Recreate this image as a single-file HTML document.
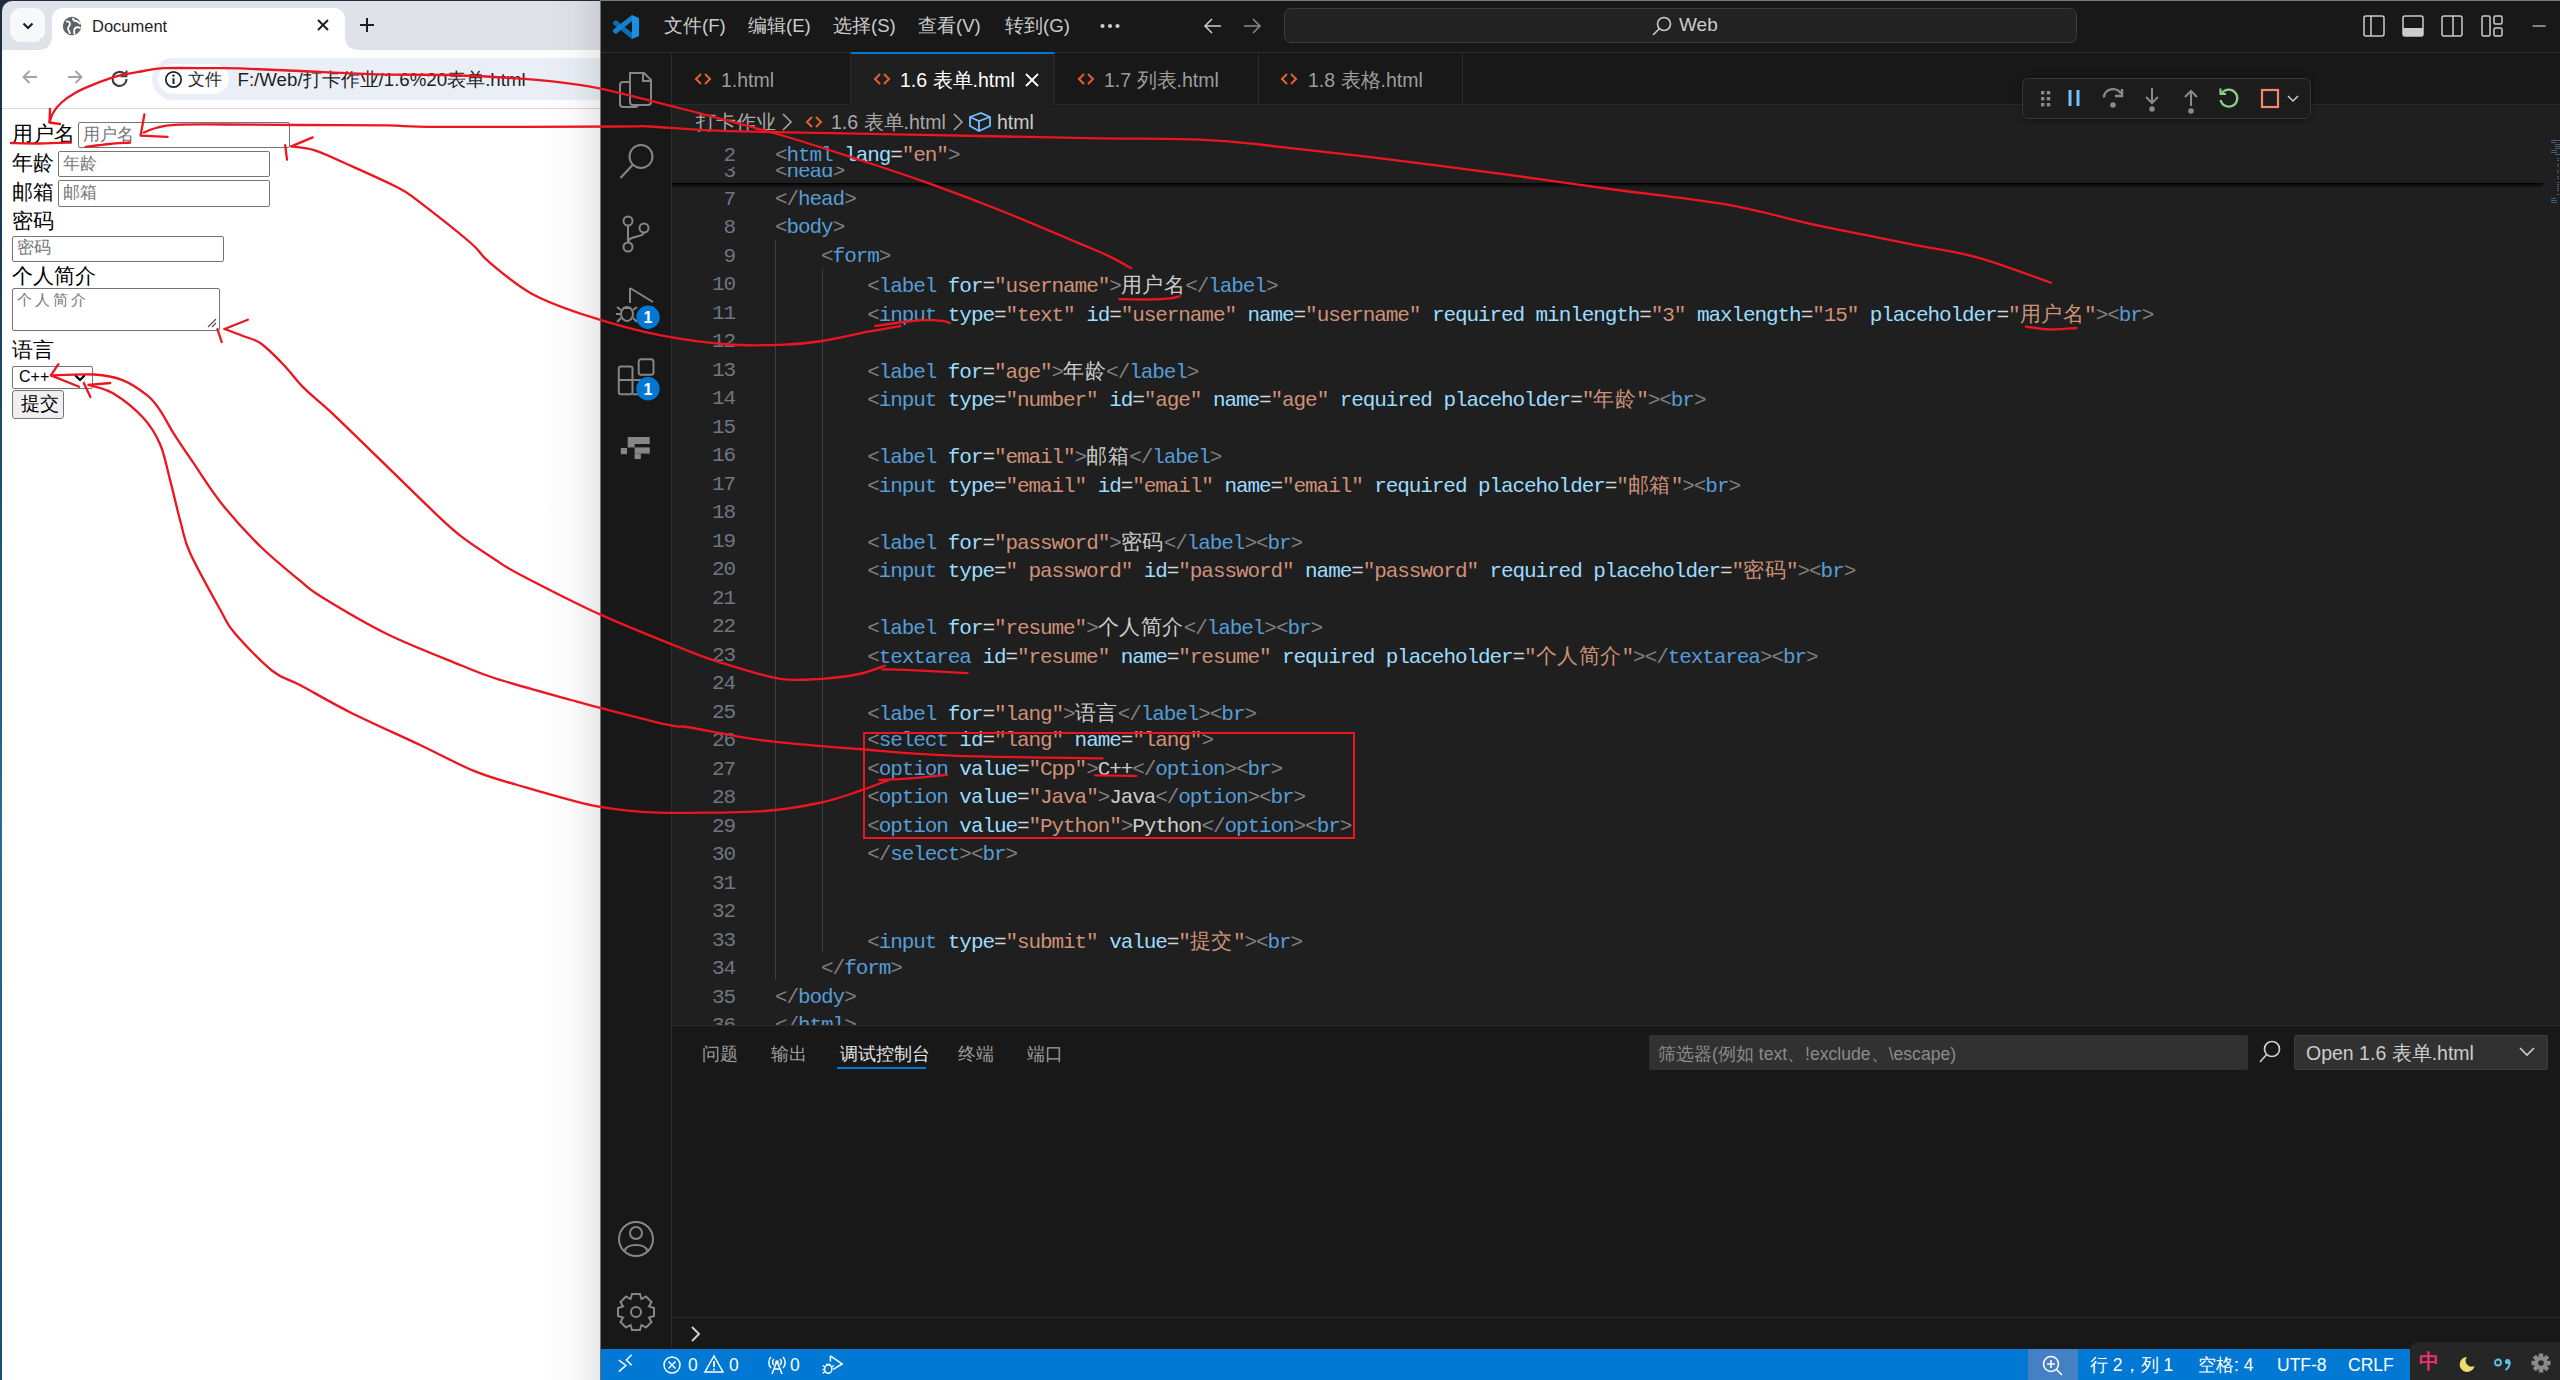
<!DOCTYPE html>
<html><head><meta charset="utf-8">
<style>
*{box-sizing:border-box;margin:0;padding:0}
html,body{width:2560px;height:1380px;overflow:hidden;background:#1f1f1f;font-family:"Liberation Sans",sans-serif}
.abs{position:absolute}
/* ---------- browser ---------- */
#br{position:absolute;left:0;top:0;width:600px;height:1380px;background:#fff;overflow:hidden}
#desk{position:absolute;left:0;top:0;width:600px;height:1380px;background:linear-gradient(#1e2c3e,#1c4a6a 30%,#2a6a8e 60%,#1d4e72)}
#tabstrip{position:absolute;left:2px;top:1px;width:598px;height:49px;background:#dfe3e9;border-top-left-radius:10px}
#toolbar{position:absolute;left:2px;top:50px;width:598px;height:59px;background:#fff;border-bottom:1px solid #d3d6da}
#content{position:absolute;left:2px;top:109px;width:598px;height:1271px;background:#fff}
.fl{position:absolute;font-size:21.3px;color:#000;line-height:22px;white-space:nowrap}
.inp{position:absolute;border:1px solid #767676;border-radius:2px;background:#fff}
.ph{position:absolute;font-size:17px;color:#757575;white-space:nowrap;line-height:20px}
/* ---------- vscode ---------- */
#vs{position:absolute;left:600px;top:0;width:1960px;height:1380px;background:#181818;border-left:1px solid #707070;border-top:1px solid #7a7a7a}
.menu{position:absolute;top:14px;font-size:18.6px;color:#cccccc;line-height:24px;white-space:nowrap}
#act{position:absolute;left:600px;top:52px;width:72px;height:1296px;background:#181818;border-right:1px solid #2b2b2b;border-top:1px solid #2b2b2b}
#tabs{position:absolute;left:672px;top:52px;width:1888px;height:53px;background:#181818;border-bottom:1px solid #2b2b2b;border-top:1px solid #2b2b2b}
.tab{position:absolute;top:0;height:52px;border-right:1px solid #2b2b2b;font-size:19.5px;color:#9d9d9d;white-space:nowrap}
.tab span.t{position:absolute;top:15px;line-height:24px}
.tico{position:absolute;top:17px;width:18px;height:18px}
#crumbs{position:absolute;left:672px;top:105px;width:1888px;height:35px;background:#1f1f1f;font-size:19.5px;color:#a9a9a9;white-space:nowrap}
#editor{position:absolute;left:672px;top:140px;width:1888px;height:885px;background:#1f1f1f;overflow:hidden}
.ln{position:absolute;left:0;width:1888px;height:28.5px;line-height:28.5px;font-family:"Liberation Mono",monospace;font-size:21px;letter-spacing:-1.08px;white-space:pre}
.ln b{position:absolute;right:1825px;font-weight:normal;color:#6e7681;text-align:right}
.cd{position:absolute;top:0}
.cd i{font-style:normal;font-family:"Liberation Sans",sans-serif;font-size:20.5px;letter-spacing:0.5px}
#sticky{position:absolute;left:0;top:0;width:1871px;height:43px;background:#1f1f1f;overflow:hidden}
#panel{position:absolute;left:672px;top:1025px;width:1888px;height:323px;background:#181818;border-top:1px solid #2b2b2b}
.ptab{position:absolute;top:16px;font-size:17.5px;color:#9d9d9d;line-height:24px;white-space:nowrap}
#status{position:absolute;left:600px;top:1349px;width:1960px;height:31px;background:#0078d4;color:#fff;font-size:17.5px;white-space:nowrap}
.st{position:absolute;top:4px;line-height:24px}
svg{position:absolute;overflow:visible}
</style></head><body>

<!-- ================= BROWSER ================= -->
<div id="br">
  <div id="desk"></div>
  <div id="tabstrip">
    <div class="abs" style="left:8px;top:7px;width:35px;height:34px;background:#f6f8fa;border-radius:11px"></div>
    <svg style="left:19px;top:18px" width="14" height="14" viewBox="0 0 14 14"><path d="M2.5 4.5 L7 9 L11.5 4.5" fill="none" stroke="#1f1f1f" stroke-width="2.2"/></svg>
    <div class="abs" style="left:50px;top:7px;width:293px;height:42px;background:#fff;border-radius:11px 11px 0 0"></div>
    <div class="abs" style="left:38px;top:37px;width:12px;height:12px;background:radial-gradient(circle at 0 0,#dfe3e9 11.5px,#fff 12px)"></div>
    <div class="abs" style="left:343px;top:37px;width:12px;height:12px;background:radial-gradient(circle at 100% 0,#dfe3e9 11.5px,#fff 12px)"></div>
    <svg style="left:60px;top:15px" width="20" height="20" viewBox="0 0 20 20"><circle cx="10" cy="10" r="9.2" fill="#5f6368"/><path d="M4 5.5 C6 5,8 6,8 8 C8 10,6 10.5,6 12.5 C6 14,7.5 15,8 17.8 M11 2 C11 4,12.5 5,14 5 C16 5,17 7,18.5 8 M18.5 12 C16 11,13.5 11,12.5 13 C11.5 15,13 17,12 18.5" fill="none" stroke="#fff" stroke-width="1.8"/></svg>
    <div class="abs" style="left:90px;top:14px;font-size:16.5px;color:#1f1f1f;line-height:22px">Document</div>
    <svg style="left:314px;top:17px" width="14" height="14" viewBox="0 0 14 14"><path d="M2 2 L12 12 M12 2 L2 12" stroke="#1f1f1f" stroke-width="2"/></svg>
    <svg style="left:357px;top:16px" width="16" height="16" viewBox="0 0 16 16"><path d="M8 1 V15 M1 8 H15" stroke="#1f1f1f" stroke-width="2"/></svg>
  </div>
  <div id="toolbar">
    <svg style="left:19px;top:18px" width="18" height="18" viewBox="0 0 18 18"><path d="M16 9 H3 M8.5 3 L2.5 9 L8.5 15" fill="none" stroke="#a0a3a7" stroke-width="1.9"/></svg>
    <svg style="left:64px;top:18px" width="18" height="18" viewBox="0 0 18 18"><path d="M2 9 H15 M9.5 3 L15.5 9 L9.5 15" fill="none" stroke="#a0a3a7" stroke-width="1.9"/></svg>
    <svg style="left:108px;top:19px" width="20" height="20" viewBox="0 0 20 20"><path d="M16.5 10 A7 7 0 1 1 14.5 5" fill="none" stroke="#3c4043" stroke-width="2.1"/><path d="M17 1.5 V7.8 H10.7 Z" fill="#3c4043" stroke="#3c4043" stroke-width="1"/></svg>
    <div class="abs" style="left:150px;top:8px;width:500px;height:42px;background:#eaeff7;border-radius:21px"></div>
    <div class="abs" style="left:156px;top:14px;width:71px;height:30px;background:#fcfdfe;border-radius:15px"></div>
    <svg style="left:161.5px;top:20px" width="19" height="19" viewBox="0 0 19 19"><circle cx="9.5" cy="9.5" r="7.7" fill="none" stroke="#1f1f1f" stroke-width="1.7"/><path d="M9.5 8.3 V14" stroke="#1f1f1f" stroke-width="2"/><circle cx="9.5" cy="5.6" r="1.2" fill="#1f1f1f"/></svg>
    <div class="abs" style="left:185.5px;top:18.5px;font-size:16.6px;color:#1f1f1f;line-height:22px">文件</div>
    <div class="abs" style="left:235.5px;top:17.5px;font-size:18.7px;color:#1f1f1f;line-height:24px;white-space:nowrap">F:/Web/打卡作业/1.6%20表单.html</div>
  </div>
  <div id="content">
  </div>
  <div class="abs" style="left:540px;top:0;width:60px;height:1380px;background:linear-gradient(to right,rgba(0,0,0,0),rgba(0,0,0,0.02) 55%,rgba(0,0,0,0.09));z-index:5"></div>
  <!-- form content (page coords) -->
  <div class="fl" style="left:12px;top:123px">用户名</div>
  <div class="inp" style="left:78px;top:122px;width:212px;height:26px"></div>
  <div class="ph" style="left:83px;top:125px">用户名</div>
  <div class="fl" style="left:12px;top:152px">年龄</div>
  <div class="inp" style="left:58px;top:151px;width:212px;height:26px"></div>
  <div class="ph" style="left:63px;top:154px">年龄</div>
  <div class="fl" style="left:12px;top:181px">邮箱</div>
  <div class="inp" style="left:58px;top:180px;width:212px;height:27px"></div>
  <div class="ph" style="left:63px;top:183px">邮箱</div>
  <div class="fl" style="left:12px;top:210px">密码</div>
  <div class="inp" style="left:12px;top:236px;width:212px;height:26px"></div>
  <div class="ph" style="left:17px;top:238px">密码</div>
  <div class="fl" style="left:12px;top:265px">个人简介</div>
  <div class="inp" style="left:12px;top:288px;width:208px;height:43px"></div>
  <div class="ph" style="left:17px;top:290px;font-size:15px;letter-spacing:3px">个人简介</div>
  <svg style="left:207px;top:318px" width="10" height="10" viewBox="0 0 10 10"><path d="M1 9 L9 1 M5 9 L9 5" stroke="#555" stroke-width="1.2"/></svg>
  <div class="fl" style="left:12px;top:339px">语言</div>
  <div class="inp" style="left:12px;top:366px;width:81px;height:23px"></div>
  <div class="abs" style="left:19px;top:367px;font-size:16px;line-height:20px;color:#000">C++</div>
  <svg style="left:74px;top:374px" width="12" height="8" viewBox="0 0 12 8"><path d="M1 1 L6 6 L11 1" fill="none" stroke="#000" stroke-width="2.2"/></svg>
  <div class="abs" style="left:12px;top:390px;width:52px;height:29px;background:#efefef;border:1px solid #767676;border-radius:3px"></div>
  <div class="fl" style="left:21px;top:393px;font-size:19.2px">提交</div>
</div>

<!-- ================= VSCODE ================= -->
<div id="vs">
</div>
<!-- title bar -->
<svg style="left:612px;top:14px" width="28" height="26" viewBox="0 0 28 26"><path d="M20 1 L27 4 V22 L20 25 L7 13 Z" fill="#1a8ee3"/><path d="M20 7 L20 19 L12 13 Z" fill="#181818"/><path d="M1 8 L4 6 L20 19 L20 25 L1 10 Z" fill="#0b6db8"/><path d="M1 18 L4 20 L20 7 L20 1 L1 16 Z" fill="#1680cf"/></svg>
<div class="menu" style="left:664px">文件(F)</div>
<div class="menu" style="left:748px">编辑(E)</div>
<div class="menu" style="left:833px">选择(S)</div>
<div class="menu" style="left:918px">查看(V)</div>
<div class="menu" style="left:1005px">转到(G)</div>
<svg style="left:1098px;top:20px" width="24" height="12" viewBox="0 0 24 12"><circle cx="4.5" cy="6" r="2.1" fill="#cccccc"/><circle cx="12" cy="6" r="2.1" fill="#cccccc"/><circle cx="19.5" cy="6" r="2.1" fill="#cccccc"/></svg>
<svg style="left:1203px;top:16px" width="20" height="20" viewBox="0 0 20 20"><path d="M18 10 H2 M9 3 L2 10 L9 17" fill="none" stroke="#cccccc" stroke-width="1.5"/></svg>
<svg style="left:1242px;top:16px" width="20" height="20" viewBox="0 0 20 20"><path d="M2 10 H18 M11 3 L18 10 L11 17" fill="none" stroke="#8a8a8a" stroke-width="1.5"/></svg>
<div class="abs" style="left:1284px;top:8px;width:793px;height:35px;background:#222222;border:1px solid #3c3c3c;border-radius:7px"></div>
<svg style="left:1651px;top:15px" width="22" height="22" viewBox="0 0 22 22"><circle cx="13" cy="9" r="6.5" fill="none" stroke="#cccccc" stroke-width="1.6"/><path d="M8.5 13.5 L2 20" stroke="#cccccc" stroke-width="1.6"/></svg>
<div class="menu" style="left:1679px;top:13px;font-size:19px">Web</div>
<svg style="left:2362px;top:14px" width="200" height="26" viewBox="0 0 200 26">
  <rect x="2" y="2" width="20" height="20" rx="2" fill="none" stroke="#cccccc" stroke-width="1.5"/><path d="M9 2 V22" stroke="#cccccc" stroke-width="1.5"/>
  <rect x="41" y="2" width="20" height="20" rx="2" fill="none" stroke="#cccccc" stroke-width="1.5"/><rect x="41" y="14" width="20" height="8" fill="#cccccc"/>
  <rect x="80" y="2" width="20" height="20" rx="2" fill="none" stroke="#cccccc" stroke-width="1.5"/><path d="M91 2 V22" stroke="#cccccc" stroke-width="1.5"/>
  <rect x="120" y="2" width="8" height="20" rx="1.5" fill="none" stroke="#cccccc" stroke-width="1.5"/><rect x="132" y="2" width="8" height="8" rx="1.5" fill="none" stroke="#cccccc" stroke-width="1.5"/><rect x="132" y="14" width="8" height="8" rx="1.5" fill="none" stroke="#cccccc" stroke-width="1.5"/>
  <path d="M170.6 12 H183.6" stroke="#cccccc" stroke-width="1.2"/>
</svg>

<!-- activity bar -->
<div id="act"></div>
<svg style="left:600px;top:52px" width="72" height="420" viewBox="0 0 72 420">
  <g fill="none" stroke="#868686" stroke-width="2">
    <path d="M30 21 H44 L51 28 V50 A3 3 0 0 1 48 53 H33 A3 3 0 0 1 30 50 Z M43 21 V29 H51"/>
    <path d="M30 30 H23 A3 3 0 0 0 20 33 V52 A3 3 0 0 0 23 55 H35 A3 3 0 0 0 38 52 V53"/>
    <circle cx="41" cy="104.5" r="11.5"/><path d="M32.8 112.8 L20.5 126"/>
    <circle cx="28" cy="169" r="4.5"/><circle cx="28" cy="195" r="4.5"/><circle cx="44" cy="176" r="4.5"/><path d="M28 173.5 V190.5 M44 180.5 C44 186,28 183,28 190.5"/>
    <path d="M30 236 L53 250 M30 236 V251"/>
    <ellipse cx="27" cy="262" rx="6" ry="7"/><path d="M21 258 L17 255 M21 266 L17 270 M33 258 L37 255 M33 266 L37 270 M20 262 H16 M23 256 L31 256"/>
    <rect x="18.8" y="314.5" width="13.7" height="27.8" rx="2"/><path d="M18.8 327.9 H45 V342.3 H32.5"/><rect x="38.7" y="307.2" width="14.8" height="15.6" rx="2.5"/>
  </g>
  <g fill="#868686"><rect x="27.7" y="385" width="22" height="7"/><rect x="27.7" y="392" width="7" height="3.5"/><rect x="34.6" y="395.4" width="15.2" height="6.2"/><rect x="34.6" y="401.6" width="6.2" height="5.5"/><rect x="20.8" y="396" width="6.2" height="6.2"/></g>
  <circle cx="48" cy="265.2" r="11.7" fill="#0078d4"/><text x="48" y="271.2" font-size="16" font-weight="bold" fill="#fff" text-anchor="middle" font-family="Liberation Sans">1</text>
  <circle cx="48" cy="336.8" r="11.7" fill="#0078d4"/><text x="48" y="342.8" font-size="16" font-weight="bold" fill="#fff" text-anchor="middle" font-family="Liberation Sans">1</text>
</svg>
<svg style="left:600px;top:1210px" width="72" height="130" viewBox="0 0 72 130">
  <g fill="none" stroke="#868686" stroke-width="2">
    <circle cx="36" cy="29" r="17"/><circle cx="36" cy="23" r="6"/><path d="M24.5 41 C27 33,45 33,47.5 41"/>
  </g>
  <path fill="none" stroke="#868686" stroke-width="2" d="M32 84 L40 84 L41.5 89 L46 86.5 L51.5 92 L49 96.5 L54 98 L54 106 L49 107.5 L51.5 112 L46 117.5 L41.5 115 L40 120 L32 120 L30.5 115 L26 117.5 L20.5 112 L23 107.5 L18 106 L18 98 L23 96.5 L20.5 92 L26 86.5 L30.5 89 Z"/>
  <circle cx="36" cy="102" r="5" fill="none" stroke="#868686" stroke-width="2"/>
</svg>

<!-- tabs -->
<div id="tabs">
  <div class="tab" style="left:0;width:179px">
    <svg class="tico" style="left:22px" viewBox="0 0 18 18"><path d="M7 4 L2 9 L7 14 M11 4 L16 9 L11 14" fill="none" stroke="#e6602b" stroke-width="2"/></svg>
    <span class="t" style="left:49px">1.html</span></div>
  <div class="tab" style="left:179px;width:204px;background:#1f1f1f;color:#ffffff;border-top:2px solid #0078d4;top:-1px;height:53px">
    <svg class="tico" style="left:22px;top:16px" viewBox="0 0 18 18"><path d="M7 4 L2 9 L7 14 M11 4 L16 9 L11 14" fill="none" stroke="#e6602b" stroke-width="2"/></svg>
    <span class="t" style="left:49px;top:14px">1.6 表单.html</span>
    <svg style="left:173px;top:18px" width="16" height="16" viewBox="0 0 16 16"><path d="M2 2 L14 14 M14 2 L2 14" stroke="#fff" stroke-width="1.8"/></svg></div>
  <div class="tab" style="left:383px;width:204px">
    <svg class="tico" style="left:22px" viewBox="0 0 18 18"><path d="M7 4 L2 9 L7 14 M11 4 L16 9 L11 14" fill="none" stroke="#e6602b" stroke-width="2"/></svg>
    <span class="t" style="left:49px">1.7 列表.html</span></div>
  <div class="tab" style="left:587px;width:204px">
    <svg class="tico" style="left:21px" viewBox="0 0 18 18"><path d="M7 4 L2 9 L7 14 M11 4 L16 9 L11 14" fill="none" stroke="#e6602b" stroke-width="2"/></svg>
    <span class="t" style="left:49px">1.8 表格.html</span></div>
</div>

<!-- breadcrumbs -->
<div id="crumbs">
  <div class="abs" style="left:24px;top:5px;line-height:24px">打卡作业</div>
  <svg style="left:109px;top:8px" width="12" height="18" viewBox="0 0 12 18"><path d="M2 1 L10 9 L2 17" fill="none" stroke="#a9a9a9" stroke-width="1.5"/></svg>
  <svg style="left:133px;top:8px" width="18" height="18" viewBox="0 0 18 18"><path d="M7 4 L2 9 L7 14 M11 4 L16 9 L11 14" fill="none" stroke="#e6602b" stroke-width="2"/></svg>
  <div class="abs" style="left:159px;top:5px;line-height:24px">1.6 表单.html</div>
  <svg style="left:280px;top:8px" width="12" height="18" viewBox="0 0 12 18"><path d="M2 1 L10 9 L2 17" fill="none" stroke="#a9a9a9" stroke-width="1.5"/></svg>
  <svg style="left:296px;top:6px" width="24" height="22" viewBox="0 0 24 22"><path d="M2 6 L13 2 L22 6 V15 L11 20 L2 15 Z M2 6 L11 10 L22 6 M11 10 V20" fill="none" stroke="#75beff" stroke-width="1.8"/></svg>
  <div class="abs" style="left:325px;top:5px;line-height:24px;color:#cccccc">html</div>
</div>

<!-- editor -->
<div id="editor">
  <div class="abs" style="left:103px;top:100px;width:1px;height:740px;background:#404040"></div>
  <div class="abs" style="left:150px;top:129px;width:1px;height:683px;background:#404040"></div>
<div class="ln" style="top:45.95px"><b>7</b><div class="cd" style="left:103.00px"><span style="color:#808080">&lt;/</span><span style="color:#569cd6">head</span><span style="color:#808080">&gt;</span></div></div>
<div class="ln" style="top:74.45px"><b>8</b><div class="cd" style="left:103.00px"><span style="color:#808080">&lt;</span><span style="color:#569cd6">body</span><span style="color:#808080">&gt;</span></div></div>
<div class="ln" style="top:102.95px"><b>9</b><div class="cd" style="left:149.08px"><span style="color:#808080">&lt;</span><span style="color:#569cd6">form</span><span style="color:#808080">&gt;</span></div></div>
<div class="ln" style="top:131.45px"><b>10</b><div class="cd" style="left:195.16px"><span style="color:#808080">&lt;</span><span style="color:#569cd6">label</span><span style="color:#cccccc"> </span><span style="color:#9cdcfe">for</span><span style="color:#d4d4d4">=</span><span style="color:#ce9178">"username"</span><span style="color:#808080">&gt;</span><span style="color:#cccccc"><i>用户名</i></span><span style="color:#808080">&lt;/</span><span style="color:#569cd6">label</span><span style="color:#808080">&gt;</span></div></div>
<div class="ln" style="top:159.95px"><b>11</b><div class="cd" style="left:195.16px"><span style="color:#808080">&lt;</span><span style="color:#569cd6">input</span><span style="color:#cccccc"> </span><span style="color:#9cdcfe">type</span><span style="color:#d4d4d4">=</span><span style="color:#ce9178">"text"</span><span style="color:#cccccc"> </span><span style="color:#9cdcfe">id</span><span style="color:#d4d4d4">=</span><span style="color:#ce9178">"username"</span><span style="color:#cccccc"> </span><span style="color:#9cdcfe">name</span><span style="color:#d4d4d4">=</span><span style="color:#ce9178">"username"</span><span style="color:#cccccc"> </span><span style="color:#9cdcfe">required</span><span style="color:#cccccc"> </span><span style="color:#9cdcfe">minlength</span><span style="color:#d4d4d4">=</span><span style="color:#ce9178">"3"</span><span style="color:#cccccc"> </span><span style="color:#9cdcfe">maxlength</span><span style="color:#d4d4d4">=</span><span style="color:#ce9178">"15"</span><span style="color:#cccccc"> </span><span style="color:#9cdcfe">placeholder</span><span style="color:#d4d4d4">=</span><span style="color:#ce9178">"<i>用户名</i>"</span><span style="color:#808080">&gt;</span><span style="color:#808080">&lt;</span><span style="color:#569cd6">br</span><span style="color:#808080">&gt;</span></div></div>
<div class="ln" style="top:188.45px"><b>12</b><div class="cd" style="left:103.00px"></div></div>
<div class="ln" style="top:216.95px"><b>13</b><div class="cd" style="left:195.16px"><span style="color:#808080">&lt;</span><span style="color:#569cd6">label</span><span style="color:#cccccc"> </span><span style="color:#9cdcfe">for</span><span style="color:#d4d4d4">=</span><span style="color:#ce9178">"age"</span><span style="color:#808080">&gt;</span><span style="color:#cccccc"><i>年龄</i></span><span style="color:#808080">&lt;/</span><span style="color:#569cd6">label</span><span style="color:#808080">&gt;</span></div></div>
<div class="ln" style="top:245.45px"><b>14</b><div class="cd" style="left:195.16px"><span style="color:#808080">&lt;</span><span style="color:#569cd6">input</span><span style="color:#cccccc"> </span><span style="color:#9cdcfe">type</span><span style="color:#d4d4d4">=</span><span style="color:#ce9178">"number"</span><span style="color:#cccccc"> </span><span style="color:#9cdcfe">id</span><span style="color:#d4d4d4">=</span><span style="color:#ce9178">"age"</span><span style="color:#cccccc"> </span><span style="color:#9cdcfe">name</span><span style="color:#d4d4d4">=</span><span style="color:#ce9178">"age"</span><span style="color:#cccccc"> </span><span style="color:#9cdcfe">required</span><span style="color:#cccccc"> </span><span style="color:#9cdcfe">placeholder</span><span style="color:#d4d4d4">=</span><span style="color:#ce9178">"<i>年龄</i>"</span><span style="color:#808080">&gt;</span><span style="color:#808080">&lt;</span><span style="color:#569cd6">br</span><span style="color:#808080">&gt;</span></div></div>
<div class="ln" style="top:273.95px"><b>15</b><div class="cd" style="left:103.00px"></div></div>
<div class="ln" style="top:302.45px"><b>16</b><div class="cd" style="left:195.16px"><span style="color:#808080">&lt;</span><span style="color:#569cd6">label</span><span style="color:#cccccc"> </span><span style="color:#9cdcfe">for</span><span style="color:#d4d4d4">=</span><span style="color:#ce9178">"email"</span><span style="color:#808080">&gt;</span><span style="color:#cccccc"><i>邮箱</i></span><span style="color:#808080">&lt;/</span><span style="color:#569cd6">label</span><span style="color:#808080">&gt;</span></div></div>
<div class="ln" style="top:330.95px"><b>17</b><div class="cd" style="left:195.16px"><span style="color:#808080">&lt;</span><span style="color:#569cd6">input</span><span style="color:#cccccc"> </span><span style="color:#9cdcfe">type</span><span style="color:#d4d4d4">=</span><span style="color:#ce9178">"email"</span><span style="color:#cccccc"> </span><span style="color:#9cdcfe">id</span><span style="color:#d4d4d4">=</span><span style="color:#ce9178">"email"</span><span style="color:#cccccc"> </span><span style="color:#9cdcfe">name</span><span style="color:#d4d4d4">=</span><span style="color:#ce9178">"email"</span><span style="color:#cccccc"> </span><span style="color:#9cdcfe">required</span><span style="color:#cccccc"> </span><span style="color:#9cdcfe">placeholder</span><span style="color:#d4d4d4">=</span><span style="color:#ce9178">"<i>邮箱</i>"</span><span style="color:#808080">&gt;</span><span style="color:#808080">&lt;</span><span style="color:#569cd6">br</span><span style="color:#808080">&gt;</span></div></div>
<div class="ln" style="top:359.45px"><b>18</b><div class="cd" style="left:103.00px"></div></div>
<div class="ln" style="top:387.95px"><b>19</b><div class="cd" style="left:195.16px"><span style="color:#808080">&lt;</span><span style="color:#569cd6">label</span><span style="color:#cccccc"> </span><span style="color:#9cdcfe">for</span><span style="color:#d4d4d4">=</span><span style="color:#ce9178">"password"</span><span style="color:#808080">&gt;</span><span style="color:#cccccc"><i>密码</i></span><span style="color:#808080">&lt;/</span><span style="color:#569cd6">label</span><span style="color:#808080">&gt;</span><span style="color:#808080">&lt;</span><span style="color:#569cd6">br</span><span style="color:#808080">&gt;</span></div></div>
<div class="ln" style="top:416.45px"><b>20</b><div class="cd" style="left:195.16px"><span style="color:#808080">&lt;</span><span style="color:#569cd6">input</span><span style="color:#cccccc"> </span><span style="color:#9cdcfe">type</span><span style="color:#d4d4d4">=</span><span style="color:#ce9178">" password"</span><span style="color:#cccccc"> </span><span style="color:#9cdcfe">id</span><span style="color:#d4d4d4">=</span><span style="color:#ce9178">"password"</span><span style="color:#cccccc"> </span><span style="color:#9cdcfe">name</span><span style="color:#d4d4d4">=</span><span style="color:#ce9178">"password"</span><span style="color:#cccccc"> </span><span style="color:#9cdcfe">required</span><span style="color:#cccccc"> </span><span style="color:#9cdcfe">placeholder</span><span style="color:#d4d4d4">=</span><span style="color:#ce9178">"<i>密码</i>"</span><span style="color:#808080">&gt;</span><span style="color:#808080">&lt;</span><span style="color:#569cd6">br</span><span style="color:#808080">&gt;</span></div></div>
<div class="ln" style="top:444.95px"><b>21</b><div class="cd" style="left:103.00px"></div></div>
<div class="ln" style="top:473.45px"><b>22</b><div class="cd" style="left:195.16px"><span style="color:#808080">&lt;</span><span style="color:#569cd6">label</span><span style="color:#cccccc"> </span><span style="color:#9cdcfe">for</span><span style="color:#d4d4d4">=</span><span style="color:#ce9178">"resume"</span><span style="color:#808080">&gt;</span><span style="color:#cccccc"><i>个人简介</i></span><span style="color:#808080">&lt;/</span><span style="color:#569cd6">label</span><span style="color:#808080">&gt;</span><span style="color:#808080">&lt;</span><span style="color:#569cd6">br</span><span style="color:#808080">&gt;</span></div></div>
<div class="ln" style="top:501.95px"><b>23</b><div class="cd" style="left:195.16px"><span style="color:#808080">&lt;</span><span style="color:#569cd6">textarea</span><span style="color:#cccccc"> </span><span style="color:#9cdcfe">id</span><span style="color:#d4d4d4">=</span><span style="color:#ce9178">"resume"</span><span style="color:#cccccc"> </span><span style="color:#9cdcfe">name</span><span style="color:#d4d4d4">=</span><span style="color:#ce9178">"resume"</span><span style="color:#cccccc"> </span><span style="color:#9cdcfe">required</span><span style="color:#cccccc"> </span><span style="color:#9cdcfe">placeholder</span><span style="color:#d4d4d4">=</span><span style="color:#ce9178">"<i>个人简介</i>"</span><span style="color:#808080">&gt;</span><span style="color:#808080">&lt;/</span><span style="color:#569cd6">textarea</span><span style="color:#808080">&gt;</span><span style="color:#808080">&lt;</span><span style="color:#569cd6">br</span><span style="color:#808080">&gt;</span></div></div>
<div class="ln" style="top:530.45px"><b>24</b><div class="cd" style="left:103.00px"></div></div>
<div class="ln" style="top:558.95px"><b>25</b><div class="cd" style="left:195.16px"><span style="color:#808080">&lt;</span><span style="color:#569cd6">label</span><span style="color:#cccccc"> </span><span style="color:#9cdcfe">for</span><span style="color:#d4d4d4">=</span><span style="color:#ce9178">"lang"</span><span style="color:#808080">&gt;</span><span style="color:#cccccc"><i>语言</i></span><span style="color:#808080">&lt;/</span><span style="color:#569cd6">label</span><span style="color:#808080">&gt;</span><span style="color:#808080">&lt;</span><span style="color:#569cd6">br</span><span style="color:#808080">&gt;</span></div></div>
<div class="ln" style="top:587.45px"><b>26</b><div class="cd" style="left:195.16px"><span style="color:#808080">&lt;</span><span style="color:#569cd6">select</span><span style="color:#cccccc"> </span><span style="color:#9cdcfe">id</span><span style="color:#d4d4d4">=</span><span style="color:#ce9178">"lang"</span><span style="color:#cccccc"> </span><span style="color:#9cdcfe">name</span><span style="color:#d4d4d4">=</span><span style="color:#ce9178">"lang"</span><span style="color:#808080">&gt;</span></div></div>
<div class="ln" style="top:615.95px"><b>27</b><div class="cd" style="left:195.16px"><span style="color:#808080">&lt;</span><span style="color:#569cd6">option</span><span style="color:#cccccc"> </span><span style="color:#9cdcfe">value</span><span style="color:#d4d4d4">=</span><span style="color:#ce9178">"Cpp"</span><span style="color:#808080">&gt;</span><span style="color:#cccccc">C++</span><span style="color:#808080">&lt;/</span><span style="color:#569cd6">option</span><span style="color:#808080">&gt;</span><span style="color:#808080">&lt;</span><span style="color:#569cd6">br</span><span style="color:#808080">&gt;</span></div></div>
<div class="ln" style="top:644.45px"><b>28</b><div class="cd" style="left:195.16px"><span style="color:#808080">&lt;</span><span style="color:#569cd6">option</span><span style="color:#cccccc"> </span><span style="color:#9cdcfe">value</span><span style="color:#d4d4d4">=</span><span style="color:#ce9178">"Java"</span><span style="color:#808080">&gt;</span><span style="color:#cccccc">Java</span><span style="color:#808080">&lt;/</span><span style="color:#569cd6">option</span><span style="color:#808080">&gt;</span><span style="color:#808080">&lt;</span><span style="color:#569cd6">br</span><span style="color:#808080">&gt;</span></div></div>
<div class="ln" style="top:672.95px"><b>29</b><div class="cd" style="left:195.16px"><span style="color:#808080">&lt;</span><span style="color:#569cd6">option</span><span style="color:#cccccc"> </span><span style="color:#9cdcfe">value</span><span style="color:#d4d4d4">=</span><span style="color:#ce9178">"Python"</span><span style="color:#808080">&gt;</span><span style="color:#cccccc">Python</span><span style="color:#808080">&lt;/</span><span style="color:#569cd6">option</span><span style="color:#808080">&gt;</span><span style="color:#808080">&lt;</span><span style="color:#569cd6">br</span><span style="color:#808080">&gt;</span></div></div>
<div class="ln" style="top:701.45px"><b>30</b><div class="cd" style="left:195.16px"><span style="color:#808080">&lt;/</span><span style="color:#569cd6">select</span><span style="color:#808080">&gt;</span><span style="color:#808080">&lt;</span><span style="color:#569cd6">br</span><span style="color:#808080">&gt;</span></div></div>
<div class="ln" style="top:729.95px"><b>31</b><div class="cd" style="left:103.00px"></div></div>
<div class="ln" style="top:758.45px"><b>32</b><div class="cd" style="left:103.00px"></div></div>
<div class="ln" style="top:786.95px"><b>33</b><div class="cd" style="left:195.16px"><span style="color:#808080">&lt;</span><span style="color:#569cd6">input</span><span style="color:#cccccc"> </span><span style="color:#9cdcfe">type</span><span style="color:#d4d4d4">=</span><span style="color:#ce9178">"submit"</span><span style="color:#cccccc"> </span><span style="color:#9cdcfe">value</span><span style="color:#d4d4d4">=</span><span style="color:#ce9178">"<i>提交</i>"</span><span style="color:#808080">&gt;</span><span style="color:#808080">&lt;</span><span style="color:#569cd6">br</span><span style="color:#808080">&gt;</span></div></div>
<div class="ln" style="top:815.45px"><b>34</b><div class="cd" style="left:149.08px"><span style="color:#808080">&lt;/</span><span style="color:#569cd6">form</span><span style="color:#808080">&gt;</span></div></div>
<div class="ln" style="top:843.95px"><b>35</b><div class="cd" style="left:103.00px"><span style="color:#808080">&lt;/</span><span style="color:#569cd6">body</span><span style="color:#808080">&gt;</span></div></div>
<div class="ln" style="top:872.45px"><b>36</b><div class="cd" style="left:103.00px"><span style="color:#808080">&lt;/</span><span style="color:#569cd6">html</span><span style="color:#808080">&gt;</span></div></div>

  <div class="abs" style="left:0;top:43px;width:1871px;height:5px;background:linear-gradient(#000 0%,rgba(0,0,0,.55) 40%,rgba(0,0,0,0));z-index:3"></div>
  <div id="sticky">
<div class="ln" style="top:18.2px;z-index:1"><b>3</b><div class="cd" style="left:103px"><span style="color:#808080">&lt;</span><span style="color:#569cd6">head</span><span style="color:#808080">&gt;</span></div></div><div class="ln" style="top:1.5px;z-index:2;background:#1f1f1f;height:25px"><b>2</b><div class="cd" style="left:103px"><span style="color:#808080">&lt;</span><span style="color:#569cd6">html</span><span style="color:#cccccc"> </span><span style="color:#9cdcfe">lang</span><span style="color:#d4d4d4">=</span><span style="color:#ce9178">"en"</span><span style="color:#808080">&gt;</span></div></div>
  </div>
  <div class="abs" style="left:1879px;top:-3px;width:9px;height:80px;background:#1f1f1f"></div><div class="abs" style="left:1879px;top:-2.5px;width:8px;height:1.3px;background:#4f8fc7;opacity:.6"></div><div class="abs" style="left:1879px;top:-0.5px;width:9px;height:1.3px;background:#5a8fbf;opacity:.6"></div><div class="abs" style="left:1879px;top:1.5px;width:5px;height:1.3px;background:#5a8fbf;opacity:.6"></div><div class="abs" style="left:1883px;top:3.5px;width:9px;height:1.3px;background:#5f8fb0;opacity:.6"></div><div class="abs" style="left:1883px;top:5.5px;width:9px;height:1.3px;background:#5f8fb0;opacity:.6"></div><div class="abs" style="left:1883px;top:7.5px;width:9px;height:1.3px;background:#5f8fb0;opacity:.6"></div><div class="abs" style="left:1879px;top:9.5px;width:6px;height:1.3px;background:#4f8fc7;opacity:.6"></div><div class="abs" style="left:1879px;top:11.5px;width:6px;height:1.3px;background:#4f8fc7;opacity:.6"></div><div class="abs" style="left:1883px;top:13.5px;width:9px;height:1.3px;background:#6a8fae;opacity:.6"></div><div class="abs" style="left:1885px;top:17.5px;width:2px;height:1.3px;background:#6a8fae;opacity:.6"></div><div class="abs" style="left:1885px;top:19.5px;width:2px;height:1.3px;background:#6a8fae;opacity:.6"></div><div class="abs" style="left:1885px;top:23.5px;width:2px;height:1.3px;background:#6a8fae;opacity:.6"></div><div class="abs" style="left:1885px;top:25.5px;width:2px;height:1.3px;background:#6a8fae;opacity:.6"></div><div class="abs" style="left:1885px;top:29.5px;width:2px;height:1.3px;background:#6a8fae;opacity:.6"></div><div class="abs" style="left:1885px;top:31.5px;width:2px;height:1.3px;background:#6a8fae;opacity:.6"></div><div class="abs" style="left:1885px;top:35.5px;width:2px;height:1.3px;background:#6a8fae;opacity:.6"></div><div class="abs" style="left:1885px;top:37.5px;width:2px;height:1.3px;background:#6a8fae;opacity:.6"></div><div class="abs" style="left:1885px;top:41.5px;width:2px;height:1.3px;background:#6a8fae;opacity:.6"></div><div class="abs" style="left:1885px;top:43.5px;width:2px;height:1.3px;background:#6a8fae;opacity:.6"></div><div class="abs" style="left:1885px;top:45.5px;width:2px;height:1.3px;background:#6a8fae;opacity:.6"></div><div class="abs" style="left:1885px;top:47.5px;width:2px;height:1.3px;background:#6a8fae;opacity:.6"></div><div class="abs" style="left:1885px;top:49.5px;width:2px;height:1.3px;background:#6a8fae;opacity:.6"></div><div class="abs" style="left:1885px;top:53.5px;width:2px;height:1.3px;background:#6a8fae;opacity:.6"></div><div class="abs" style="left:1879px;top:57.5px;width:5px;height:1.3px;background:#5f8fb0;opacity:.6"></div><div class="abs" style="left:1879px;top:59.5px;width:6px;height:1.3px;background:#4f8fc7;opacity:.6"></div><div class="abs" style="left:1879px;top:61.5px;width:6px;height:1.3px;background:#4f8fc7;opacity:.6"></div>
</div>

<!-- debug toolbar -->
<div class="abs" style="left:2022px;top:78px;width:289px;height:41px;background:#1c1c1c;border:1px solid #363636;border-radius:6px;box-shadow:0 0 6px rgba(0,0,0,.5)"></div>
<svg style="left:2022px;top:78px" width="289" height="41" viewBox="0 0 289 41">
  <g fill="#8a8a8a"><rect x="19" y="13" width="3.4" height="3.4"/><rect x="24.8" y="13" width="3.4" height="3.4"/><rect x="19" y="19" width="3.4" height="3.4"/><rect x="24.8" y="19" width="3.4" height="3.4"/><rect x="19" y="25" width="3.4" height="3.4"/><rect x="24.8" y="25" width="3.4" height="3.4"/></g>
  <path d="M48 12 V28 M56 12 V28" stroke="#75beff" stroke-width="3"/>
  <path d="M82 19.5 A9 8 0 0 1 99 15.5" fill="none" stroke="#8a8a8a" stroke-width="2.4"/><path d="M100 11 V18 H93" fill="none" stroke="#8a8a8a" stroke-width="2.4"/><circle cx="91" cy="27" r="2.8" fill="#8a8a8a"/>
  <path d="M130 10 V25 M124 19 L130 25 L136 19" fill="none" stroke="#8a8a8a" stroke-width="2"/><circle cx="130" cy="31" r="2.8" fill="#8a8a8a"/>
  <path d="M169 28 V13 M163 19 L169 13 L175 19" fill="none" stroke="#8a8a8a" stroke-width="2"/><circle cx="169" cy="33" r="2.8" fill="#8a8a8a"/>
  <path d="M198.5 22 A8.5 8.5 0 1 0 200 15" fill="none" stroke="#89d185" stroke-width="2.2"/><path d="M198.5 10.5 V16 H204" fill="none" stroke="#89d185" stroke-width="2.2"/>
  <rect x="240" y="12" width="16" height="17" fill="none" stroke="#f48771" stroke-width="2.2"/>
  <path d="M266 18 L271 23 L276 18" fill="none" stroke="#cccccc" stroke-width="1.5"/>
</svg>

<!-- red box around option lines -->
<div class="abs" style="left:863px;top:732px;width:492px;height:107px;border:2px solid #e8161f"></div>

<!-- panel -->
<div id="panel">
  <div class="ptab" style="left:30px">问题</div>
  <div class="ptab" style="left:99px">输出</div>
  <div class="ptab" style="left:168px;color:#e7e7e7">调试控制台</div>
  <div class="abs" style="left:165px;top:41px;width:89px;height:2px;background:#0078d4"></div>
  <div class="ptab" style="left:286px">终端</div>
  <div class="ptab" style="left:355px">端口</div>
  <div class="abs" style="left:977px;top:9px;width:599px;height:35px;background:#313131;border:1px solid #313131;border-radius:2px"></div>
  <div class="ptab" style="left:986px;top:16px;color:#8b8b8b;font-size:17.6px">筛选器(例如 text、!exclude、\escape)</div>
  <svg style="left:1586px;top:13px" width="24" height="26" viewBox="0 0 24 26"><circle cx="14" cy="10" r="7.5" fill="none" stroke="#cccccc" stroke-width="1.7"/><path d="M8.6 15.5 L2 23" stroke="#cccccc" stroke-width="1.7"/></svg>
  <div class="abs" style="left:1622px;top:9px;width:254px;height:35px;background:#313131;border:1px solid #3c3c3c;border-radius:2px"></div>
  <div class="ptab" style="left:1634px;top:15px;color:#cccccc;font-size:19.5px">Open 1.6 表单.html</div>
  <svg style="left:1846px;top:20px" width="18" height="12" viewBox="0 0 18 12"><path d="M2 2 L9 9 L16 2" fill="none" stroke="#cccccc" stroke-width="1.7"/></svg>
  <div class="abs" style="left:0;top:291px;width:1888px;height:1px;background:#2b2b2b"></div>
  <svg style="left:17px;top:299px" width="14" height="18" viewBox="0 0 14 18"><path d="M3 2 L10 9 L3 16" fill="none" stroke="#cccccc" stroke-width="2"/></svg>
</div>

<!-- status bar -->
<div id="status">
  <svg style="left:0;top:0" width="40" height="31" viewBox="0 0 40 31"><path d="M18.8 11 L25.8 16.5 L18.8 22.6 M31.7 5.7 L26.4 11 L31.7 16.2" fill="none" stroke="#fff" stroke-width="1.5"/></svg>
  <svg style="left:62px;top:6px" width="20" height="20" viewBox="0 0 20 20"><circle cx="10" cy="10" r="8" fill="none" stroke="#fff" stroke-width="1.5"/><path d="M6.5 6.5 L13.5 13.5 M13.5 6.5 L6.5 13.5" stroke="#fff" stroke-width="1.5"/></svg>
  <div class="st" style="left:88px">0</div>
  <svg style="left:103px;top:5px" width="22" height="20" viewBox="0 0 22 20"><path d="M11 2 L20 18 H2 Z" fill="none" stroke="#fff" stroke-width="1.5"/><path d="M11 7 V13" stroke="#fff" stroke-width="1.8"/><circle cx="11" cy="15.5" r="1" fill="#fff"/></svg>
  <div class="st" style="left:129px">0</div>
  <svg style="left:165px;top:5px" width="24" height="22" viewBox="0 0 24 22"><path d="M12 7 L7 20 M12 7 L17 20 M9 15 H15 M6 3 A8 8 0 0 0 6 14 M18 3 A8 8 0 0 1 18 14 M9 5 A4 4 0 0 0 9 11 M15 5 A4 4 0 0 1 15 11" fill="none" stroke="#fff" stroke-width="1.5"/><circle cx="12" cy="8" r="1.8" fill="#fff"/></svg>
  <div class="st" style="left:190px">0</div>
  <svg style="left:200px;top:0" width="60" height="31" viewBox="0 0 60 31"><path d="M30.4 6.8 L42.1 15 L33.3 20.3 M30.4 6.8 V12.5" fill="none" stroke="#fff" stroke-width="1.5"/><ellipse cx="28.3" cy="20" rx="3.6" ry="4.3" fill="none" stroke="#fff" stroke-width="1.4"/><path d="M22.7 16.5 L25 18 M22.7 24.5 L25 22.5 M33.9 16.5 L31.6 18 M22.5 20.5 H24.7 M26 15.5 H30.6" stroke="#fff" stroke-width="1.3"/></svg>
  <div class="abs" style="left:1428px;top:0;width:50px;height:31px;background:#4680c4"></div>
  <svg style="left:1441px;top:5px" width="24" height="24" viewBox="0 0 24 24"><circle cx="10" cy="10" r="7.5" fill="none" stroke="#fff" stroke-width="1.6"/><path d="M15.5 15.5 L21 21 M10 6 V14 M6 10 H14" stroke="#fff" stroke-width="1.6"/></svg>
  <div class="st" style="left:1490px">行 2，列 1</div>
  <div class="st" style="left:1598px">空格: 4</div>
  <div class="st" style="left:1677px">UTF-8</div>
  <div class="st" style="left:1748px">CRLF</div>
  <div class="abs" style="left:1810px;top:-7px;width:150px;height:38px;background:#262626;border-radius:8px 0 0 0"></div>
  <div class="st" style="left:1819px;top:0px;color:#e8336a;font-size:20px;font-weight:bold">中</div>
  <svg style="left:1856px;top:4px" width="22" height="22" viewBox="0 0 22 22"><path d="M11 4 A7.5 7.5 0 1 0 18.5 13 A6 6 0 0 1 11 4 Z" fill="#efdb6e"/></svg>
  <svg style="left:1890px;top:6px" width="30" height="20" viewBox="0 0 30 20"><circle cx="8" cy="7.5" r="3" fill="none" stroke="#58c2e8" stroke-width="1.8"/><circle cx="17.5" cy="6.5" r="2.6" fill="#58c2e8"/><path d="M19.8 6.5 Q20 12 15.5 15" fill="none" stroke="#58c2e8" stroke-width="2"/></svg>
  <svg style="left:1930px;top:3px" width="22" height="22" viewBox="0 0 22 22"><g fill="#8a8a8a" transform="translate(11 11)"><rect x="-2.2" y="-9.5" width="4.4" height="5" transform="rotate(0)"/><rect x="-2.2" y="-9.5" width="4.4" height="5" transform="rotate(45)"/><rect x="-2.2" y="-9.5" width="4.4" height="5" transform="rotate(90)"/><rect x="-2.2" y="-9.5" width="4.4" height="5" transform="rotate(135)"/><rect x="-2.2" y="-9.5" width="4.4" height="5" transform="rotate(180)"/><rect x="-2.2" y="-9.5" width="4.4" height="5" transform="rotate(225)"/><rect x="-2.2" y="-9.5" width="4.4" height="5" transform="rotate(270)"/><rect x="-2.2" y="-9.5" width="4.4" height="5" transform="rotate(315)"/><circle r="6.8"/><circle r="2.8" fill="#262626"/></g></svg>
</div>

<div class="abs" style="left:600px;top:0;width:1px;height:1380px;background:#707070;z-index:40"></div>
<!-- annotations -->
<svg style="left:0;top:0;z-index:50" width="2560" height="1380" viewBox="0 0 2560 1380"><g fill="none" stroke="#ec1520" stroke-width="2.3" stroke-linecap="round" stroke-linejoin="round"><path d="M49.5,122.0 C50.1,120.5 51.1,116.2 53.0,113.0 C54.9,109.8 57.3,106.3 61.0,103.0 C64.7,99.7 69.5,96.1 75.0,93.0 C80.5,89.9 86.8,87.2 93.8,84.4 C100.8,81.6 109.4,78.4 117.2,76.2 C125.0,74.0 132.9,72.8 140.7,71.5 C148.5,70.2 152.3,68.8 164.0,68.2 C175.7,67.7 198.3,68.2 211.0,68.2 C223.7,68.2 225.2,67.9 240.0,68.4 C254.8,68.9 276.7,70.0 300.0,71.0 C323.3,72.0 355.0,73.7 380.0,74.4 C405.0,75.1 427.9,74.4 450.0,75.0 C472.1,75.6 495.8,77.1 512.5,78.1 C529.2,79.1 537.5,79.9 550.0,81.2 C562.5,82.6 575.8,84.3 587.5,86.2 C599.2,88.2 604.1,89.3 620.0,93.1 C635.9,96.9 656.9,102.3 682.8,109.0 C708.7,115.7 746.0,125.0 775.5,133.5 C805.0,142.0 833.8,151.5 860.0,160.0 C886.2,168.5 908.3,175.9 932.5,184.6 C956.7,193.3 980.9,202.5 1005.0,212.2 C1029.2,221.9 1060.0,235.2 1077.4,242.6 C1094.8,250.0 1100.4,252.2 1109.3,256.4 C1118.2,260.6 1127.4,266.1 1131.0,268.0"/><path d="M11.0,143.0 C15.8,143.1 30.1,143.6 40.0,143.5 C49.9,143.4 65.5,142.7 70.6,142.5"/><path d="M1119.4,299.1 C1124.5,299.2 1141.6,299.6 1150.0,299.5 C1158.4,299.4 1165.1,298.9 1170.0,298.4 C1174.9,297.8 1178.0,296.6 1179.6,296.2"/><path d="M143.8,132.5 C145.8,131.8 150.8,129.3 156.0,128.0 C161.2,126.7 163.5,125.3 175.0,124.8 C186.5,124.2 204.2,124.5 225.0,124.5 C245.8,124.5 272.9,124.8 300.0,125.0 C327.1,125.2 364.6,125.1 387.5,125.4 C410.4,125.7 398.8,126.7 437.5,126.9 C476.2,127.1 584.6,126.6 620.0,126.5 C655.4,126.4 631.8,125.7 650.0,126.5 C668.2,127.3 685.7,129.8 729.0,131.2 C772.3,132.5 850.2,133.4 910.0,134.6 C969.8,135.8 1038.4,137.2 1087.5,138.1 C1136.6,139.0 1173.5,138.4 1204.7,139.8 C1236.0,141.2 1247.7,143.5 1275.0,146.3 C1302.3,149.2 1331.2,152.4 1368.7,156.9 C1406.2,161.4 1460.5,168.3 1500.0,173.6 C1539.5,178.9 1568.4,183.4 1606.0,188.5 C1643.6,193.6 1690.3,198.2 1725.8,204.4 C1761.2,210.6 1787.7,219.0 1818.7,225.7 C1849.7,232.3 1885.2,239.0 1911.7,244.3 C1938.2,249.6 1954.8,251.2 1978.0,257.6 C2001.2,264.0 2038.8,278.6 2051.0,282.8"/><path d="M85.6,146.9 C89.7,146.4 102.6,144.7 110.0,144.0 C117.4,143.3 126.7,142.8 130.0,142.5"/><path d="M2025.9,326.6 C2029.9,327.1 2041.6,329.3 2050.0,329.5 C2058.4,329.7 2072.0,328.2 2076.4,328.0"/><path d="M291.3,146.4 C295.2,147.1 305.1,147.3 314.8,150.4 C324.5,153.5 335.7,159.0 349.6,165.2 C363.5,171.4 386.7,181.7 398.3,187.8 C409.9,193.9 406.8,192.4 419.0,201.7 C431.2,211.0 459.7,233.5 471.3,243.5 C482.9,253.5 478.5,253.3 488.7,261.7 C498.9,270.1 515.3,284.7 532.2,293.9 C549.1,303.1 568.8,309.8 590.0,316.7 C611.2,323.6 636.4,330.6 659.6,335.2 C682.8,339.8 707.8,342.9 729.0,344.5 C750.2,346.1 771.5,345.1 787.0,344.5 C802.5,343.9 808.5,343.1 822.0,341.0 C835.5,338.9 854.9,334.2 868.0,331.7 C881.1,329.2 895.2,326.9 900.6,326.0"/><path d="M875.2,326.0 C879.9,325.3 895.2,323.0 903.5,322.0 C911.8,321.0 918.7,320.3 925.2,320.1 C931.7,319.9 938.5,320.4 942.6,320.9 C946.7,321.4 948.7,322.6 949.9,323.0"/><path d="M224.6,329.0 C227.8,330.2 237.4,333.8 243.5,336.2 C249.6,338.6 254.1,338.7 260.9,343.5 C267.6,348.3 276.8,357.7 284.0,365.2 C291.2,372.7 296.6,380.7 304.3,388.4 C312.0,396.1 318.8,400.7 330.4,411.6 C342.0,422.5 357.0,437.2 373.9,453.6 C390.8,470.0 417.4,496.3 431.9,510.1 C446.4,523.9 450.3,527.9 460.9,536.2 C471.5,544.5 486.1,553.7 495.7,560.0 C505.3,566.3 501.4,564.8 518.8,573.9 C536.2,583.0 571.5,601.4 600.0,614.4 C628.5,627.4 668.8,643.2 690.0,651.6 C711.2,660.0 712.5,660.2 727.5,664.7 C742.5,669.2 764.4,676.4 780.0,678.8 C795.6,681.1 808.2,679.5 821.3,678.8 C834.4,678.0 848.1,676.2 858.8,674.0 C869.4,671.8 880.6,667.0 885.0,665.6"/><path d="M882.2,669.4 C886.1,669.5 891.4,669.1 905.6,669.8 C919.8,670.4 957.2,672.5 967.5,673.1"/><path d="M50.9,375.4 C58.1,375.2 82.3,373.7 94.2,374.5 C106.1,375.3 113.7,376.7 122.5,380.1 C131.3,383.6 140.7,390.2 147.0,395.2 C153.3,400.2 155.7,404.0 160.1,410.3 C164.5,416.6 168.0,424.4 173.3,432.9 C178.7,441.4 184.0,449.3 192.2,461.2 C200.4,473.1 211.0,490.4 222.3,504.5 C233.6,518.6 247.1,533.3 260.0,546.0 C272.9,558.7 289.7,572.2 300.0,580.7 C310.3,589.2 307.2,588.1 321.7,597.0 C336.2,605.9 363.8,622.6 387.0,634.0 C410.2,645.4 442.8,657.8 460.9,665.2 C479.0,672.6 477.3,672.7 495.7,678.5 C514.0,684.3 553.6,695.1 571.0,700.0 C588.4,704.9 583.6,703.6 600.0,707.8 C616.4,712.0 654.6,721.9 669.6,725.2 C684.6,728.5 674.1,724.9 690.0,727.5 C705.9,730.1 736.9,737.0 765.0,740.6 C793.1,744.2 827.5,746.5 858.8,749.0 C890.0,751.5 911.9,754.0 952.5,755.6 C993.1,757.2 1077.5,757.9 1102.5,758.4"/><path d="M1095.0,775.3 L1136.3,775.9"/><path d="M88.6,384.9 C92.7,386.3 103.9,387.8 113.0,393.3 C122.1,398.8 135.3,409.3 143.2,417.8 C151.0,426.3 155.7,434.1 160.1,444.2 C164.5,454.2 166.1,464.9 169.6,478.1 C173.1,491.3 177.4,510.7 180.9,523.3 C184.4,535.9 183.7,539.0 190.3,553.5 C196.9,568.0 213.0,596.7 220.4,610.0 C227.8,623.3 226.1,623.1 234.8,633.3 C243.5,643.5 261.6,662.4 272.5,671.0 C283.4,679.6 287.1,678.1 300.0,685.0 C312.9,691.9 330.1,702.2 350.0,712.2 C369.9,722.2 399.0,735.0 419.6,744.8 C440.2,754.6 457.6,764.2 473.9,770.9 C490.2,777.6 497.5,779.2 517.4,785.0 C537.3,790.8 571.8,801.2 593.5,805.7 C615.2,810.2 631.7,811.0 647.8,812.2 C663.9,813.4 670.5,813.0 690.0,812.8 C709.5,812.6 743.1,812.7 765.0,811.0 C786.9,809.3 805.7,805.8 821.3,802.5 C836.9,799.2 847.5,795.0 858.8,791.2 C870.0,787.5 883.8,781.9 888.8,780.0"/><path d="M879.4,780.0 C885.3,779.7 903.8,779.0 915.0,778.1 C926.2,777.2 941.6,775.3 946.9,774.8"/><path d="M50.0,109.0 L49.5,122.5 L60.0,124.0"/><path d="M144.4,114.4 L140.6,135.6 L167.5,136.9"/><path d="M312.7,137.4 L291.3,146.4"/><path d="M285.2,145.2 L287.0,159.7"/><path d="M247.8,319.7 L224.6,329.0"/><path d="M217.4,329.0 L221.7,342.0"/><path d="M58.4,364.1 L50.9,375.4 L79.1,386.7"/><path d="M110.2,383.0 L88.6,384.9"/><path d="M83.8,383.0 L90.4,397.1"/></g></svg>
</body></html>
